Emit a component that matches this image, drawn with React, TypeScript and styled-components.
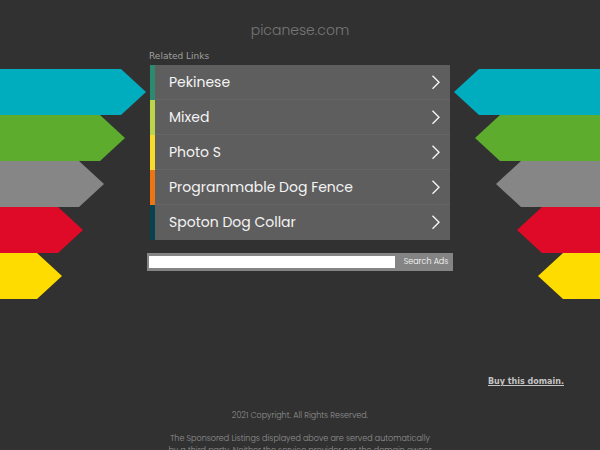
import React from "react";
import styled, { createGlobalStyle } from "styled-components";

const GlobalStyle = createGlobalStyle`
  * { box-sizing: border-box; }
  body {
    margin: 0;
    background: #313131;
    font-family: Poppins, Inter, sans-serif;
  }
`;

const Page = styled.div`
  height: 100vh;
  overflow: hidden;
  display: flex;
  flex-direction: column;
`;

const Title = styled.h1`
  margin: 20px 0 0;
  font-size: 14px;
  line-height: 20px;
  font-weight: 300;
  text-align: center;
  color: #777;
`;

const Stage = styled.div`
  display: grid;
  grid-template-columns: minmax(0, 1fr) 306px minmax(0, 1fr);
  margin-top: 8px;
`;

const Stripes = styled.div<{ $side: "left" | "right" }>`
  display: flex;
  flex-direction: column;
  align-items: ${(p) => (p.$side === "left" ? "flex-start" : "flex-end")};
  padding-top: 21px;
`;

const Stripe = styled.div<{ $color: string; $inset: number; $side: "left" | "right" }>`
  height: 46px;
  width: calc(100% - ${(p) => p.$inset}px);
  background: ${(p) => p.$color};
  clip-path: ${(p) =>
    p.$side === "left"
      ? "polygon(0 0, calc(100% - 25px) 0, 100% 50%, calc(100% - 25px) 100%, 0 100%)"
      : "polygon(25px 0, 100% 0, 100% 100%, 25px 100%, 0 50%)"};
`;

const Main = styled.main`
  display: flex;
  flex-direction: column;
`;

const Heading = styled.h2`
  margin: 0 2px;
  padding-bottom: 1px;
  font: 400 9px/16px "DejaVu Sans", sans-serif;
  color: #a0a0a0;
`;

const LinkList = styled.ul`
  list-style: none;
  margin: 0 3px;
  padding: 0;
`;

const LinkItem = styled.li<{ $accent: string }>`
  border-left: 5px solid ${(p) => p.$accent};
  background: #5e5e5e;
`;

const RelatedLink = styled.a`
  display: flex;
  align-items: center;
  justify-content: space-between;
  height: 35px;
  padding: 0 9px 0 14px;
  border-bottom: 1px solid #666;
  font-size: 14px;
  line-height: 20px;
  color: #f4f4f4;
  text-decoration: none;
  li:last-child > & { border-bottom-color: transparent; }
`;

const SearchForm = styled.form`
  display: flex;
  margin-top: 13px;
  height: 18px;
  padding: 3px 2px;
  background: #848484;
`;

const SearchInput = styled.input`
  flex: 1;
  min-width: 0;
  height: 12px;
  padding: 0 2px;
  border: 0;
  border-radius: 0;
  background: #fff;
  font: 8px/12px Poppins, Inter, sans-serif;
`;

const SearchButton = styled.button`
  width: 56px;
  padding: 0 0 0 6px;
  border: 0;
  background: transparent;
  color: #fff;
  font: 300 8px/12px Poppins, Inter, sans-serif;
`;

const BuyLink = styled.a`
  align-self: flex-end;
  margin: 75px 36px 0 0;
  font: 700 8px/16px "DejaVu Sans", sans-serif;
  color: #c4c4c4;
`;

const Footer = styled.footer`
  margin: 20px 20px 0;
  text-align: center;
  font-size: 8px;
  font-weight: 300;
  line-height: 12px;
  color: #929292;
  p { margin: 0 0 11px; }
`;

const colors = ["#00adbf", "#5dac2e", "#868686", "#df0a28", "#ffdc00"];

const links = [
  { label: "Pekinese", accent: "#2b8a70" },
  { label: "Mixed", accent: "#bcd44c" },
  { label: "Photo S", accent: "#fadb2c" },
  { label: "Programmable Dog Fence", accent: "#ed7514" },
  { label: "Spoton Dog Collar", accent: "#08424f" },
];

function Chevron() {
  return (
    <svg width="10" height="16" viewBox="0 0 10 16" fill="none" stroke="#f4f4f4" strokeWidth="1.4" aria-hidden="true">
      <path d="M1.5 1.8 8 8.3 1.5 14.8" />
    </svg>
  );
}

function StripeColumn({ side }: { side: "left" | "right" }) {
  return (
    <Stripes $side={side} aria-hidden="true">
      {colors.map((color, i) => (
        <Stripe key={color} $color={color} $inset={1 + i * 21} $side={side} />
      ))}
    </Stripes>
  );
}

export default function App() {
  return (
    <>
      <GlobalStyle />
      <Page>
        <Title>picanese.com</Title>
        <Stage>
          <StripeColumn side="left" />
          <Main>
            <Heading>Related Links</Heading>
            <LinkList>
              {links.map(({ label, accent }) => (
                <LinkItem key={label} $accent={accent}>
                  <RelatedLink href="#">
                    {label}
                    <Chevron />
                  </RelatedLink>
                </LinkItem>
              ))}
            </LinkList>
            <SearchForm onSubmit={(e) => e.preventDefault()}>
              <SearchInput type="text" aria-label="Search Ads" />
              <SearchButton type="submit">Search Ads</SearchButton>
            </SearchForm>
          </Main>
          <StripeColumn side="right" />
        </Stage>
        <BuyLink href="#">Buy this domain.</BuyLink>
        <Footer>
          <p>2021 Copyright. All Rights Reserved.</p>
          <p>
            The Sponsored Listings displayed above are served automatically
            <br />
            by a third party. Neither the service provider nor the domain owner
          </p>
        </Footer>
      </Page>
    </>
  );
}
